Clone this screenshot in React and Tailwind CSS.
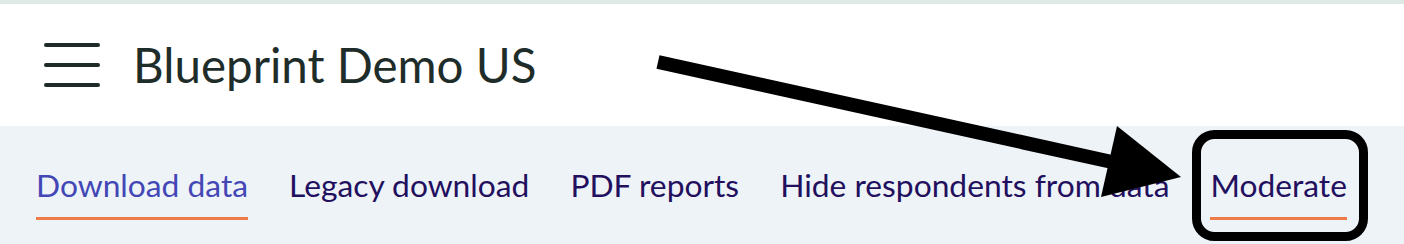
const tabs = [
  { label: 'Download data', active: true },
  { label: 'Legacy download' },
  { label: 'PDF reports' },
  { label: 'Hide respondents from data' },
  { label: 'Moderate', underline: true },
]

export default function App() {
  return (
    <div className="relative w-[1404px] h-[244px] overflow-hidden bg-white">
      {/* top strip */}
      <div className="h-[4px] bg-[#dfe9e6]" />

      {/* header */}
      <header className="h-[122px] flex items-center pl-[44px] bg-white">
        <div className="flex flex-col gap-[16.5px] w-[56px]">
          <span className="block h-[3.5px] rounded-full bg-[#1f2b28]" />
          <span className="block h-[3.5px] rounded-full bg-[#1f2b28]" />
          <span className="block h-[3.5px] rounded-full bg-[#1f2b28]" />
        </div>
        <h1 className="ml-[33px] font-['Lato',sans-serif] text-[47.5px] leading-none text-[#1f2d2a]">
          Blueprint Demo US
        </h1>
      </header>

      {/* tabs */}
      <nav className="h-[118px] bg-[#eef3f8] pl-[36px] pt-[44px] flex gap-[41px] font-['Lato',sans-serif]">
        {tabs.map((t) => (
          <div key={t.label} className="flex flex-col">
            <span
              className={
                'text-[31.75px] leading-none whitespace-nowrap ' +
                (t.active ? 'text-[#4347b6]' : 'text-[#22105e]')
              }
            >
              {t.label}
            </span>
            <span
              className={
                'mt-[15px] h-[3.5px] ' +
                (t.active || t.underline ? 'bg-[#ef7b4b]' : 'bg-transparent')
              }
            />
          </div>
        ))}
      </nav>

      {/* annotation overlay */}
      <svg
        className="absolute inset-0 pointer-events-none"
        width="1404"
        height="244"
        viewBox="0 0 1404 244"
      >
        <line x1="658" y1="62" x2="1112" y2="162" stroke="#000" strokeWidth="14" />
        <polygon points="1181,177 1117,126 1101,197" fill="#000" />
        <rect x="1196.5" y="134.5" width="167" height="102" rx="18" fill="none" stroke="#000" strokeWidth="9" />
      </svg>
    </div>
  )
}
